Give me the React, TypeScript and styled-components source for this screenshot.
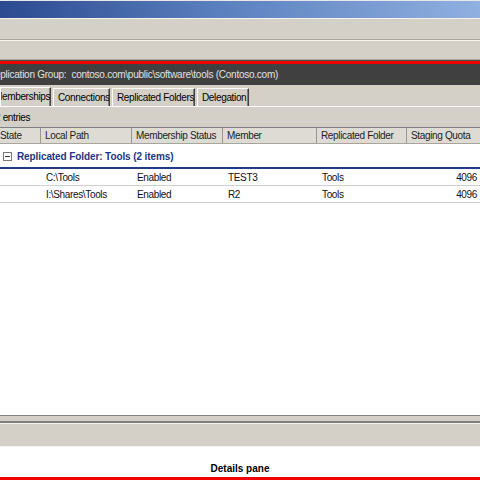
import React from "react";
import styled, { createGlobalStyle } from "styled-components";

const Global = createGlobalStyle`
  html, body {
    margin: 0;
    padding: 0;
    background: #ffffff;
    overflow: hidden;
  }
  body {
    font-family: Tahoma, "Liberation Sans", Arial, sans-serif;
    font-size: 10px;
    letter-spacing: -0.35px;
    color: #000;
  }
`;

const Window = styled.div`
  width: 480px;
  height: 480px;
  display: flex;
  flex-direction: column;
  overflow: hidden;
  background: #d4d0c8;
`;

const TitleBar = styled.div`
  height: 17px;
  border-top: 1px solid #e8e8e8;
  background: linear-gradient(90deg, #2b4a90 0%, #5a7fbe 45%, #8fb0e0 100%);
`;

const Band = styled.div<{ $h: number }>`
  height: ${(p) => p.$h}px;
  background: #d4d0c8;
  border-top: 1px solid #f4f3ee;
  border-bottom: 1px solid #a8a59c;
  box-sizing: border-box;
`;

const RedRule = styled.div<{ $top?: boolean }>`
  height: 3px;
  background: #f00000;
  border-top: ${(p) => (p.$top ? "1px solid #505050" : "none")};
`;

const GroupBar = styled.div`
  height: 21px;
  background: #404040;
  color: #e2e2e2;
  display: flex;
  align-items: center;
  overflow: hidden;
  white-space: nowrap;
  letter-spacing: -0.25px;
`;

const Clip = styled.span<{ $shift: number }>`
  margin-left: ${(p) => -p.$shift}px;
`;

const TabStrip = styled.div`
  height: 22px;
  display: flex;
  align-items: flex-end;
  border-bottom: 1px solid #ffffff;
  box-sizing: border-box;
  overflow: hidden;
`;

const Tab = styled.div<{ $active?: boolean; $w: number }>`
  width: ${(p) => p.$w}px;
  height: ${(p) => (p.$active ? 20 : 18)}px;
  margin-bottom: ${(p) => (p.$active ? -1 : 0)}px;
  padding-bottom: ${(p) => (p.$active ? 2 : 0)}px;
  box-sizing: border-box;
  background: #d4d0c8;
  border-top: 1px solid #ffffff;
  border-left: 1px solid #ffffff;
  border-right: 1px solid #404040;
  box-shadow: inset -1px 0 0 #808080;
  display: flex;
  align-items: center;
  padding-left: 4px;
  white-space: nowrap;
  overflow: hidden;
  flex-shrink: 0;
  margin-right: 2px;
`;

const EntriesBar = styled.div`
  height: 20px;
  display: flex;
  align-items: center;
  padding-left: 3px;
  border-bottom: 1px solid #808080;
  white-space: nowrap;
  overflow: hidden;
`;

const Grid = "41px 91px 91px 94px 90px 1fr";

const HeaderRow = styled.div`
  height: 15px;
  display: grid;
  grid-template-columns: ${Grid};
  background: #dedbd4;
  border-bottom: 1px solid #a8a59c;
`;

const HeadCell = styled.div<{ $first?: boolean }>`
  display: flex;
  align-items: center;
  padding-left: ${(p) => (p.$first ? 0 : 4)}px;
  border-right: 1px solid #9a978f;
  white-space: nowrap;
  overflow: hidden;
  color: #222;
  &:last-child {
    border-right: none;
  }
`;

const List = styled.div`
  flex: 1;
  background: #ffffff;
  display: flex;
  flex-direction: column;
`;

const GroupRow = styled.div`
  height: 25px;
  display: flex;
  align-items: center;
  gap: 5px;
  padding-left: 3px;
  padding-top: 2px;
  border-bottom: 2px solid #1f3d8a;
  box-sizing: border-box;
`;

const Toggle = styled.span`
  width: 7px;
  height: 7px;
  border: 1px solid #7a7a7a;
  position: relative;
  display: inline-block;
  &::after {
    content: "";
    position: absolute;
    left: 1px;
    right: 1px;
    top: 3px;
    height: 1px;
    background: #333;
  }
`;

const GroupTitle = styled.span`
  color: #1d3582;
  font-weight: bold;
  letter-spacing: -0.1px;
`;

const Row = styled.div`
  height: 16px;
  display: grid;
  grid-template-columns: ${Grid};
  align-items: center;
  border-bottom: 1px solid #cfcfcf;
`;

const Cell = styled.div<{ $right?: boolean }>`
  padding-left: 5px;
  padding-right: ${(p) => (p.$right ? 3 : 0)}px;
  text-align: ${(p) => (p.$right ? "right" : "left")};
  white-space: nowrap;
  overflow: hidden;
  color: #111;
`;

const Splitter = styled.div`
  height: 32px;
  background: #d4d0c8;
  border-top: 1px solid #808080;
  display: flex;
  flex-direction: column;
  box-sizing: border-box;
`;

const SplitTop = styled.div`
  height: 5px;
  border-bottom: 2px solid #808080;
  box-shadow: 0 1px 0 #f4f3ee;
`;

const SplitBottom = styled.div`
  flex: 1;
  border-bottom: 1px solid #f4f3ee;
  box-shadow: 0 1px 0 #505050;
  margin-top: 1px;
`;

const Details = styled.div`
  height: 30px;
  background: #ffffff;
  display: flex;
  align-items: flex-end;
  justify-content: center;
  padding-bottom: 3px;
  box-sizing: border-box;
  font-weight: bold;
  letter-spacing: 0;
  color: #000;
`;

const rows = [
  { path: "C:\\Tools", status: "Enabled", member: "TEST3", folder: "Tools", quota: "4096" },
  { path: "I:\\Shares\\Tools", status: "Enabled", member: "R2", folder: "Tools", quota: "4096" },
];

export default function App() {
  return (
    <Window>
      <Global />
      <TitleBar />
      <Band $h={22} />
      <Band $h={20} />
      <RedRule $top />
      <GroupBar>
        <Clip $shift={12}>
          Replication Group:&nbsp; contoso.com\public\software\tools (Contoso.com)
        </Clip>
      </GroupBar>
      <TabStrip>
        <Tab $active $w={51}>
          <Clip $shift={11}>Memberships</Clip>
        </Tab>
        <Tab $w={57}>Connections</Tab>
        <Tab $w={83}>Replicated Folders</Tab>
        <Tab $w={52}>Delegation</Tab>
      </TabStrip>
      <EntriesBar>
        <Clip $shift={8}>2 entries</Clip>
      </EntriesBar>
      <HeaderRow>
        <HeadCell $first>State</HeadCell>
        <HeadCell>Local Path</HeadCell>
        <HeadCell>Membership Status</HeadCell>
        <HeadCell>Member</HeadCell>
        <HeadCell>Replicated Folder</HeadCell>
        <HeadCell>Staging Quota</HeadCell>
      </HeaderRow>
      <List>
        <GroupRow>
          <Toggle />
          <GroupTitle>Replicated Folder: Tools (2 items)</GroupTitle>
        </GroupRow>
        {rows.map((r) => (
          <Row key={r.path}>
            <Cell />
            <Cell>{r.path}</Cell>
            <Cell>{r.status}</Cell>
            <Cell>{r.member}</Cell>
            <Cell>{r.folder}</Cell>
            <Cell $right>{r.quota}</Cell>
          </Row>
        ))}
      </List>
      <Splitter>
        <SplitTop />
        <SplitBottom />
      </Splitter>
      <Details>Details pane</Details>
      <RedRule />
    </Window>
  );
}
